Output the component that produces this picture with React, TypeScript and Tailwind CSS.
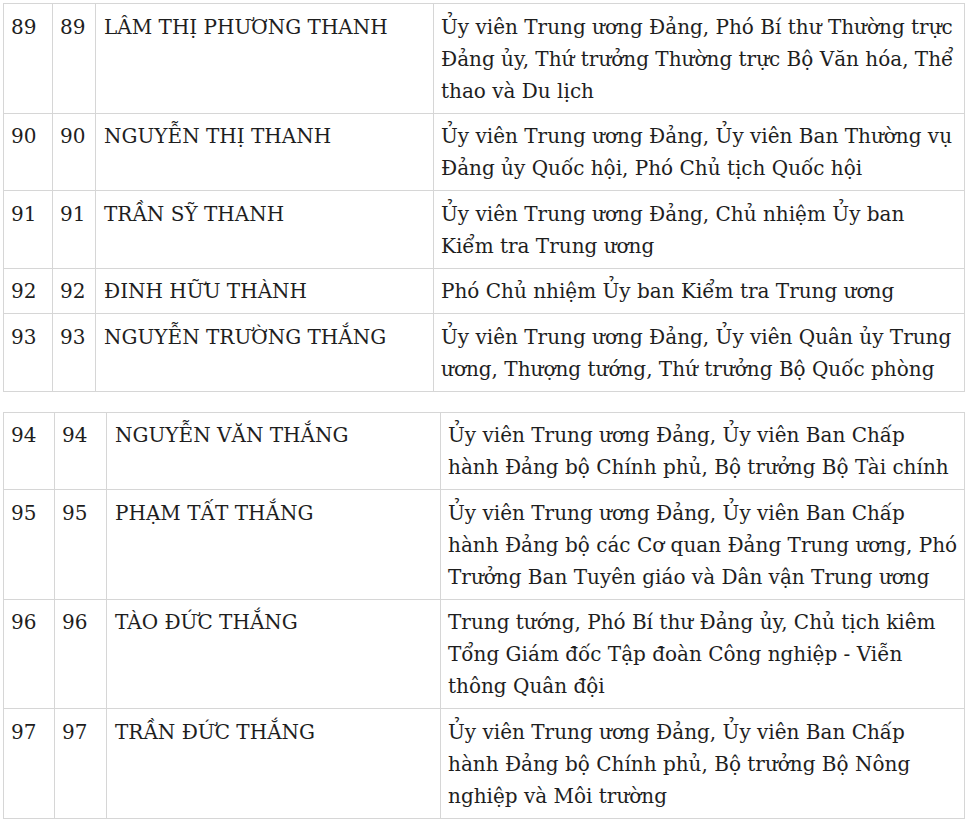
type Row = { stt: string; no: string; name: string; lines: string[] };

const table1: Row[] = [
  {
    stt: '89',
    no: '89',
    name: 'LÂM THỊ PHƯƠNG THANH',
    lines: [
      'Ủy viên Trung ương Đảng, Phó Bí thư Thường trực',
      'Đảng ủy, Thứ trưởng Thường trực Bộ Văn hóa, Thể',
      'thao và Du lịch',
    ],
  },
  {
    stt: '90',
    no: '90',
    name: 'NGUYỄN THỊ THANH',
    lines: ['Ủy viên Trung ương Đảng, Ủy viên Ban Thường vụ', 'Đảng ủy Quốc hội, Phó Chủ tịch Quốc hội'],
  },
  {
    stt: '91',
    no: '91',
    name: 'TRẦN SỸ THANH',
    lines: ['Ủy viên Trung ương Đảng, Chủ nhiệm Ủy ban', 'Kiểm tra Trung ương'],
  },
  {
    stt: '92',
    no: '92',
    name: 'ĐINH HỮU THÀNH',
    lines: ['Phó Chủ nhiệm Ủy ban Kiểm tra Trung ương'],
  },
  {
    stt: '93',
    no: '93',
    name: 'NGUYỄN TRƯỜNG THẮNG',
    lines: ['Ủy viên Trung ương Đảng, Ủy viên Quân ủy Trung', 'ương, Thượng tướng, Thứ trưởng Bộ Quốc phòng'],
  },
];

const table2: Row[] = [
  {
    stt: '94',
    no: '94',
    name: 'NGUYỄN VĂN THẮNG',
    lines: ['Ủy viên Trung ương Đảng, Ủy viên Ban Chấp', 'hành Đảng bộ Chính phủ, Bộ trưởng Bộ Tài chính'],
  },
  {
    stt: '95',
    no: '95',
    name: 'PHẠM TẤT THẮNG',
    lines: [
      'Ủy viên Trung ương Đảng, Ủy viên Ban Chấp',
      'hành Đảng bộ các Cơ quan Đảng Trung ương, Phó',
      'Trưởng Ban Tuyên giáo và Dân vận Trung ương',
    ],
  },
  {
    stt: '96',
    no: '96',
    name: 'TÀO ĐỨC THẮNG',
    lines: [
      'Trung tướng, Phó Bí thư Đảng ủy, Chủ tịch kiêm',
      'Tổng Giám đốc Tập đoàn Công nghiệp - Viễn',
      'thông Quân đội',
    ],
  },
  {
    stt: '97',
    no: '97',
    name: 'TRẦN ĐỨC THẮNG',
    lines: [
      'Ủy viên Trung ương Đảng, Ủy viên Ban Chấp',
      'hành Đảng bộ Chính phủ, Bộ trưởng Bộ Nông',
      'nghiệp và Môi trường',
    ],
  },
];

const cell = 'border-r border-b border-[#d6d6d6] px-[7px] pt-[6.5px] pb-[6px] whitespace-nowrap overflow-hidden';

const MemberTable = ({ rows, cols }: { rows: Row[]; cols: string }) => (
  <div className={`grid ${cols} border-l border-t border-[#d6d6d6]`}>
    {rows.map((r) => (
      <div key={r.stt} className="contents">
        <div className={cell}>{r.stt}</div>
        <div className={cell}>{r.no}</div>
        <div className={`${cell} pl-[8px]`}>{r.name}</div>
        <div className={`${cell} pl-[7px]`}>
          {r.lines.map((l, i) => (
            <div key={i}>{l}</div>
          ))}
        </div>
      </div>
    ))}
  </div>
);

export default function App() {
  return (
    <div className="min-h-[822px] bg-white pl-[3px] pt-[3px] font-['DejaVu_Serif',serif] text-[20px] leading-[32px] text-[#1e1e1e]">
      <div className="w-[962px]">
        <MemberTable rows={table1} cols="grid-cols-[49px_43px_338px_531px]" />
        <div className="h-[20px]" />
        <MemberTable rows={table2} cols="grid-cols-[51px_52px_334px_524px]" />
      </div>
    </div>
  );
}
